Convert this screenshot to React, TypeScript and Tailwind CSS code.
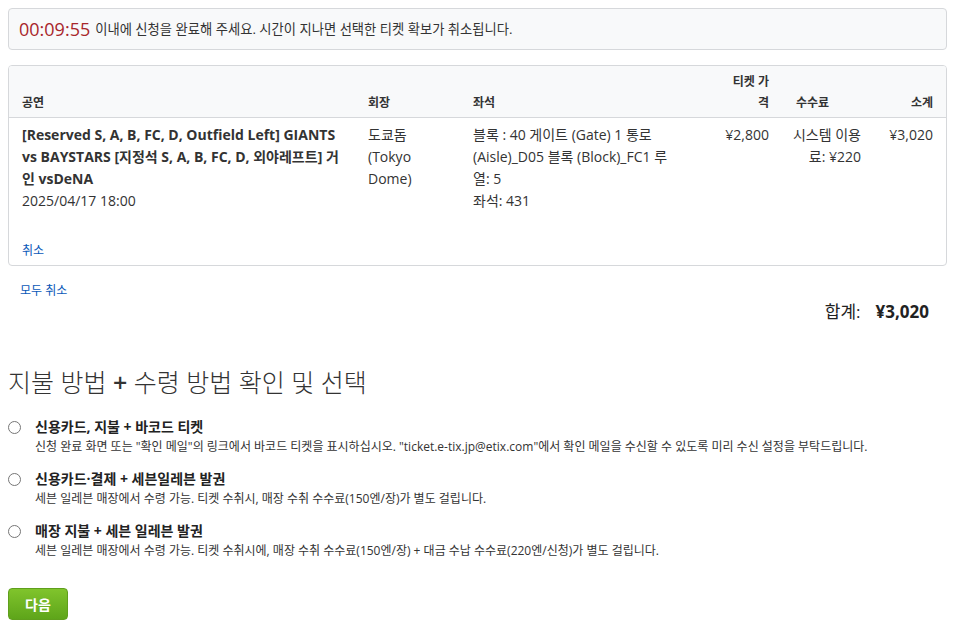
import React from "react";

const font = { fontFamily: '"Open Sans", "Noto Sans CJK KR", sans-serif' };

function Radio() {
  return <span className="mt-[4px] block h-[13px] w-[13px] shrink-0 rounded-full border border-[#767676] bg-white" />;
}

const options = [
  {
    title: "신용카드, 지불 + 바코드 티켓",
    desc: '신청 완료 화면 또는 "확인 메일"의 링크에서 바코드 티켓을 표시하십시오. "ticket.e-tix.jp@etix.com"에서 확인 메일을 수신할 수 있도록 미리 수신 설정을 부탁드립니다.',
  },
  {
    title: "신용카드·결제 + 세븐일레븐 발권",
    desc: "세븐 일레븐 매장에서 수령 가능. 티켓 수취시, 매장 수취 수수료(150엔/장)가 별도 걸립니다.",
  },
  {
    title: "매장 지불 + 세븐 일레븐 발권",
    desc: "세븐 일레븐 매장에서 수령 가능. 티켓 수취시에, 매장 수취 수수료(150엔/장) + 대금 수납 수수료(220엔/신청)가 별도 걸립니다.",
  },
];

export default function App() {
  return (
    <div className="min-h-[630px] bg-white pt-[8px] pl-[8px] pr-[10px] text-[#333]" style={font}>
      {/* timer alert */}
      <div className="flex h-[42px] items-center rounded-[4px] border border-[#d6d8db] bg-[#f8f9fa] pl-[10px]">
        <span className="text-[18px] leading-[24px] text-[#a8262b]">00:09:55</span>
        <span className="ml-[5px] text-[13.3px] leading-[22px] text-[#333]">
          이내에 신청을 완료해 주세요. 시간이 지나면 선택한 티켓 확보가 취소됩니다.
        </span>
      </div>

      {/* table */}
      <div className="mt-[15px] overflow-hidden rounded-[4px] border border-[#d6d8db]">
        <div className="grid grid-cols-[346px_105px_242px_68px_92px_58px] items-end border-b border-[#d6d8db] bg-[#f8f9fa] px-[13px] pt-[5px] pb-[4px] text-[12px] font-semibold leading-[21px] text-[#333]">
          <div>공연</div>
          <div>회장</div>
          <div>좌석</div>
          <div className="pr-[14px] text-right">
            티켓 가
            <br />격
          </div>
          <div className="pl-[13px]">수수료</div>
          <div className="text-right">소계</div>
        </div>
        <div className="px-[13px] pt-[6px] pb-[5px]">
          <div className="grid grid-cols-[346px_105px_242px_68px_92px_58px] whitespace-nowrap text-[14px] leading-[22px] text-[#333]">
            <div>
              <div className="font-bold">
                [Reserved S, A, B, FC, D, Outfield Left] GIANTS
                <br />
                vs BAYSTARS [지정석 S, A, B, FC, D, 외야레프트] 거
                <br />인 vsDeNA
              </div>
              <div>2025/04/17 18:00</div>
            </div>
            <div>
              도쿄돔
              <br />
              (Tokyo
              <br />
              Dome)
            </div>
            <div>
              블록 : 40 게이트 (Gate) 1 통로
              <br />
              (Aisle)_D05 블록 (Block)_FC1 루
              <br />
              열: 5
              <br />
              좌석: 431
            </div>
            <div className="pr-[14px] text-right">¥2,800</div>
            <div className="pr-[14px] text-right">
              시스템 이용
              <br />
              료: ¥220
            </div>
            <div className="text-right">¥3,020</div>
          </div>
          <div className="mt-[30px] text-[12px] leading-[18px] text-[#0a58b8]">취소</div>
        </div>
      </div>

      {/* below table */}
      <div className="mt-[16px] pl-[12px] text-[12px] leading-[18px] text-[#0a58b8]">모두 취소</div>
      <div className="flex justify-end pr-[18px] text-[17px] leading-[24px] text-[#222]">
        <span>합계:</span>
        <span className="ml-[15px] font-bold">¥3,020</span>
      </div>

      <h2 className="mt-[42px] text-[25px] font-light leading-[32px] text-[#333]">
        지불 방법 <span className="font-semibold">+</span> 수령 방법 확인 및 선택
      </h2>

      <div className="mt-[19px] flex flex-col gap-[13px]">
        {options.map((o) => (
          <div key={o.title} className="flex gap-[14px]">
            <Radio />
            <div>
              <div className="text-[14px] font-bold leading-[20px] text-[#222]">{o.title}</div>
              <div className="text-[12px] leading-[19px] text-[#333]">{o.desc}</div>
            </div>
          </div>
        ))}
      </div>

      <button className="mt-[28px] flex h-[32px] w-[60px] items-center justify-center rounded-[4px] border border-[#5f9f1c] bg-gradient-to-b from-[#80c42c] to-[#5ea51a] text-[14px] font-bold text-white">
        다음
      </button>
    </div>
  );
}
